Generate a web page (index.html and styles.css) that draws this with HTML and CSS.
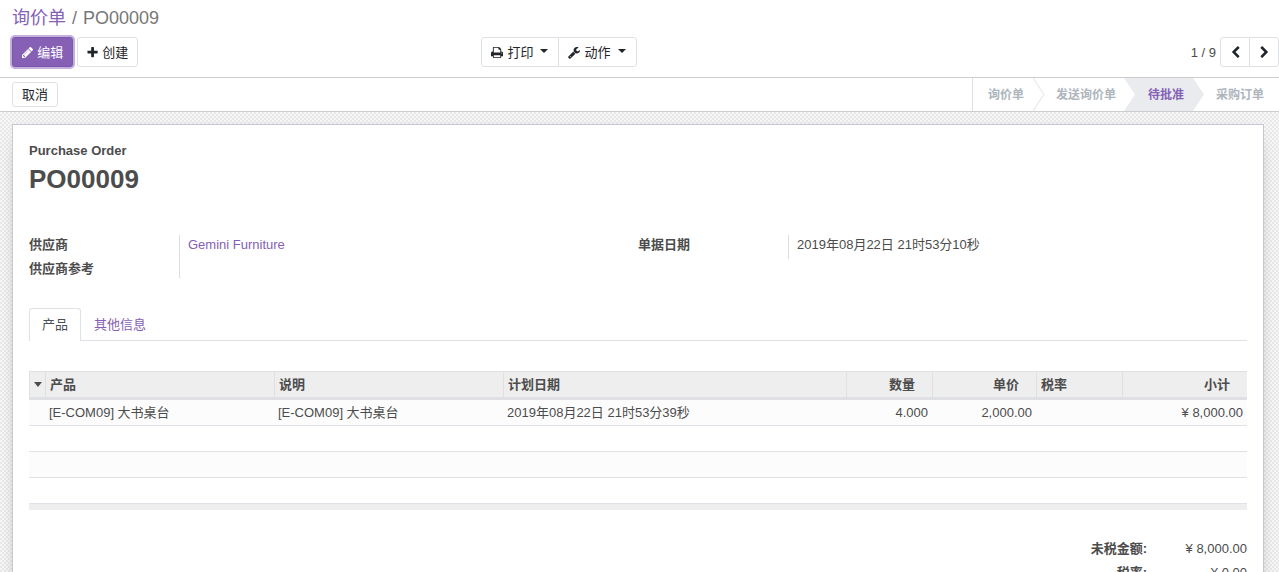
FILE: index.html
```
<!DOCTYPE html>
<html lang="zh-CN">
<head>
<meta charset="utf-8">
<title>PO00009</title>
<link rel="stylesheet" href="styles.css">
</head>
<body>
<header class="control-panel">
  <nav class="breadcrumb"><a href="#">询价单</a><span>/</span><span>PO00009</span></nav>
  <div class="toolbar">
    <div class="toolbar-left">
      <div class="actions">
        <button type="button" class="btn btn-primary"><svg class="icon" viewBox="128 0 1536 1792"><path d="M491 1536l91-91-235-235-91 91v107h128v128h107zm523-928q0-22-22-22-10 0-17 7l-542 542q-7 7-7 17 0 22 22 22 10 0 17-7l542-542q7-7 7-17zm-54-192l416 416-832 832h-416v-416zm683 96q0 53-37 90l-166 166-416-416 166-165q36-38 90-38 53 0 91 38l235 234q37 39 37 91z"/></svg>编辑</button>
        <button type="button" class="btn"><svg class="icon" viewBox="128 0 1536 1792"><path d="M1600 736v192q0 40-28 68t-68 28h-416v416q0 40-28 68t-68 28h-192q-40 0-68-28t-28-68v-416h-416q-40 0-68-28t-28-68v-192q0-40 28-68t68-28h416v-416q0-40 28-68t68-28h192q40 0 68 28t28 68v416h416q40 0 68 28t28 68z"/></svg>创建</button>
      </div>
      <div class="btn-group">
        <button type="button" class="btn"><svg class="icon" viewBox="64 0 1664 1792"><path d="M448 1536h896v-256h-896v256zm0-640h896v-384h-160q-40 0-68-28t-28-68v-160h-640v640zm1152 64q0-26-19-45t-45-19-45 19-19 45 19 45 45 19 45-19 19-45zm128 0v416q0 13-9.5 22.5t-22.5 9.5h-224v160q0 40-28 68t-68 28h-960q-40 0-68-28t-28-68v-160h-224q-13 0-22.5-9.5t-9.5-22.5v-416q0-79 56.5-135.5t135.5-56.5h64v-544q0-40 28-68t68-28h672q40 0 88 20t76 48l152 152q28 28 48 76t20 88v256h64q79 0 135.5 56.5t56.5 135.5z"/></svg>打印<span class="caret"></span></button>
        <button type="button" class="btn"><svg class="icon" viewBox="64 0 1664 1792"><path d="M448 1472q0-26-19-45t-45-19-45 19-19 45 19 45 45 19 45-19 19-45zm644-420l-682 682q-37 37-90 37-52 0-91-37l-106-108q-38-36-38-90 0-53 38-91l681-681q39 98 114.5 173.5t173.5 114.5zm634-435q0 39-23 106-47 134-164.500 217.500t-258.500 83.500q-185 0-316.500-131.500t-131.500-316.500 131.500-316.500 316.500-131.500q58 0 121.500 16.500t107.500 46.500q16 11 16 28t-16 28l-293 169v224l193 107q5-3 79-48.500t135.500-81 70.500-35.500q15 0 23.500 10t8.500 25z"/></svg>动作<span class="caret"></span></button>
      </div>
    </div>
    <div class="pager">
      <span>1 / 9</span>
      <div class="btn-group">
        <button type="button" class="btn btn-page" aria-label="上一页"><svg class="icon" viewBox="0 0 1792 1792"><path d="M1427 301l-531 531 531 531q19 19 19 45t-19 45l-166 166q-19 19-45 19t-45-19l-742-742q-19-19-19-45t19-45l742-742q19-19 45-19t45 19l166 166q19 19 19 45t-19 45z"/></svg></button>
        <button type="button" class="btn btn-page" aria-label="下一页"><svg class="icon" viewBox="0 0 1792 1792"><path d="M1363 877l-742 742q-19 19-45 19t-45-19l-166-166q-19-19-19-45t19-45l531-531-531-531q-19-19-19-45t19-45l166-166q19-19 45-19t45 19l742 742q19 19 19 45t-19 45z"/></svg></button>
      </div>
    </div>
  </div>
</header>
<div class="statusbar">
  <button type="button" class="btn btn-small">取消</button>
  <ol class="steps">
    <li class="step">询价单</li>
    <li class="step"><svg class="arrow" viewBox="0 0 12 33" preserveAspectRatio="none"><path d="M0 0L11 16.500L0 33"/></svg>发送询价单</li>
    <li class="step step-active">待批准</li>
    <li class="step">采购订单</li>
  </ol>
</div>
<main class="content">
  <section class="sheet">
    <div class="title">
      <span class="kind">Purchase Order</span>
      <h1>PO00009</h1>
    </div>
    <div class="groups">
      <dl class="group">
        <dt>供应商</dt><dd><a href="#">Gemini Furniture</a></dd>
        <dt>供应商参考</dt><dd class="short"></dd>
      </dl>
      <dl class="group">
        <dt>单据日期</dt><dd>2019年08月22日 21时53分10秒</dd>
      </dl>
    </div>
    <nav class="tabs"><a class="tab tab-active" href="#">产品</a><a class="tab" href="#">其他信息</a></nav>
    <table class="lines">
      <colgroup><col class="c-handle"><col class="c-text"><col class="c-text"><col><col class="c-qty"><col class="c-price"><col class="c-qty"><col class="c-total"></colgroup>
      <thead>
        <tr><th class="handle"><span class="caret"></span></th><th>产品</th><th>说明</th><th>计划日期</th><th class="num">数量</th><th class="num">单价</th><th>税率</th><th class="num">小计</th></tr>
      </thead>
      <tbody>
        <tr><td></td><td>[E-COM09] 大书桌台</td><td>[E-COM09] 大书桌台</td><td>2019年08月22日 21时53分39秒</td><td class="num">4.000</td><td class="num">2,000.00</td><td></td><td class="num">¥ 8,000.00</td></tr>
        <tr><td colspan="8"></td></tr>
        <tr><td colspan="8"></td></tr>
        <tr><td colspan="8"></td></tr>
      </tbody>
      <tfoot><tr><td colspan="8"></td></tr></tfoot>
    </table>
    <dl class="totals">
      <dt>未税金额:</dt><dd>¥ 8,000.00</dd>
      <dt>税率:</dt><dd>¥ 0.00</dd>
    </dl>
  </section>
</main>
</body>
</html>
```
FILE: styles.css
```
* { box-sizing: border-box; }
body {
  margin: 0;
  height: 100vh;
  overflow: hidden;
  display: flex;
  flex-direction: column;
  font: 13px/20px "Liberation Sans", "Noto Sans CJK SC", sans-serif;
  color: #4c4c4c;
  background: #fff;
}
a { color: #8560b5; text-decoration: none; }
dl, dd, ol, h1 { margin: 0; padding: 0; }

.control-panel { flex: none; padding: 5px 0 10px 12px; border-bottom: 1px solid #ccc; }
.breadcrumb { display: flex; gap: 6px; height: 27px; margin-bottom: 5px; font-size: 18px; line-height: 27px; color: #777; }
.toolbar { display: grid; grid-template-columns: 1fr 1fr; align-items: center; }
.toolbar-left { display: flex; justify-content: space-between; padding-right: 9px; }
.actions { display: flex; gap: 4px; }
.btn {
  display: flex;
  align-items: center;
  gap: 4px;
  height: 30px;
  padding: 1px 9px 0;
  border: 1px solid #dee2e6;
  border-radius: 3px;
  background: #fff;
  color: #212529;
  font: inherit;
}
.btn-primary { background: #8560b5; border-color: #7c56ac; color: #fff; box-shadow: 0 0 0 2px #c3b0db; }
.btn-small { height: 25px; padding-top: 0; }
.btn-page { width: 30px; padding: 0; justify-content: center; }
.icon { height: 13px; fill: currentColor; }
.caret { border: 4px solid transparent; border-top-color: currentColor; border-bottom: 0; }
.btn .caret { margin: 0 1px 4px 3px; }
.btn-group { display: flex; }
.btn-group .btn + .btn { margin-left: -1px; border-radius: 0 3px 3px 0; }
.btn-group .btn:first-child { border-radius: 3px 0 0 3px; }
.pager { display: flex; align-items: center; justify-content: flex-end; gap: 4px; }
.pager span { padding-top: 1px; }

.statusbar { flex: none; display: flex; justify-content: space-between; align-items: center; height: 34px; padding-left: 12px; border-bottom: 1px solid #ccc; }
.steps { display: flex; height: 33px; list-style: none; border-left: 1px solid #dee2e6; font-size: 12px; font-weight: bold; line-height: 34px; color: #adb5bd; }
.step { position: relative; padding: 0 16px; }
.step:first-child { padding-left: 15px; }
.step:last-child { padding-right: 15px; }
.arrow { position: absolute; top: 0; left: -7px; width: 12px; height: 33px; fill: none; stroke: #dee2e6; }
.step-active { z-index: 0; color: #8560b5; }
.step-active::before {
  content: "";
  position: absolute;
  z-index: -1;
  inset: 0 -4px 0 -8px;
  background: #e9ebef;
  clip-path: polygon(0 0, calc(100% - 11px) 0, 100% 50%, calc(100% - 11px) 100%, 0 100%, 11px 50%);
}

.content { flex: 1; min-height: 0; overflow: hidden; padding: 12px 15px 0 12px; background: repeating-conic-gradient(#e8e8e8 0 25%, #f7f7f7 0 50%) 0 0 / 4px 4px; }
.sheet { min-height: 600px; padding: 16px; background: #fff; border: 1px solid #c8c8d3; box-shadow: 0 5px 20px -15px #000; }
.title { margin-bottom: 38px; }
.kind { font-weight: bold; }
.title h1 { font-size: 26px; line-height: 36px; }
.groups { display: grid; grid-template-columns: 1fr 1fr; align-items: start; margin-bottom: 25px; }
.group { display: grid; grid-template-columns: 150px 1fr; }
.group dt { font-weight: bold; height: 24px; }
.group dd { height: 24px; padding-left: 8px; border-left: 1px solid #ddd; }
.group .short { height: 19px; }
.tabs { display: flex; margin-bottom: 30px; border-bottom: 1px solid #dee2e6; }
.tab { height: 32px; padding: 6px 12px; border: 1px solid transparent; border-bottom: 0; }
.tab-active { height: 33px; margin-bottom: -1px; color: #495057; background: #fff; border-color: #dee2e6; border-radius: 3px 3px 0 0; }

.lines { width: 100%; table-layout: fixed; border-collapse: separate; border-spacing: 0; }
.c-handle { width: 16px; }
.c-text { width: 229px; }
.c-qty { width: 86px; }
.c-price { width: 104px; }
.c-total { width: 125px; }
.lines th { height: 29px; padding: 0 4px; text-align: left; background: #eee; border: solid #dee0e4; border-width: 1px 0 3px 1px; }
.handle .caret { display: block; border-top-width: 5px; }
.lines td { height: 26px; padding: 0 4px; border-bottom: 1px solid #dee2e6; }
.lines tbody tr:nth-child(odd) { background: #fcfcfc; }
.lines .num { text-align: right; }
.lines th.num { padding-right: 17px; }
.lines tfoot td { height: 6px; padding: 0; border: 0; background: #eee; }
.totals { display: grid; grid-template-columns: auto 100px; justify-content: end; row-gap: 4px; margin-top: 29px; text-align: right; }
.totals dt { font-weight: bold; }
```
